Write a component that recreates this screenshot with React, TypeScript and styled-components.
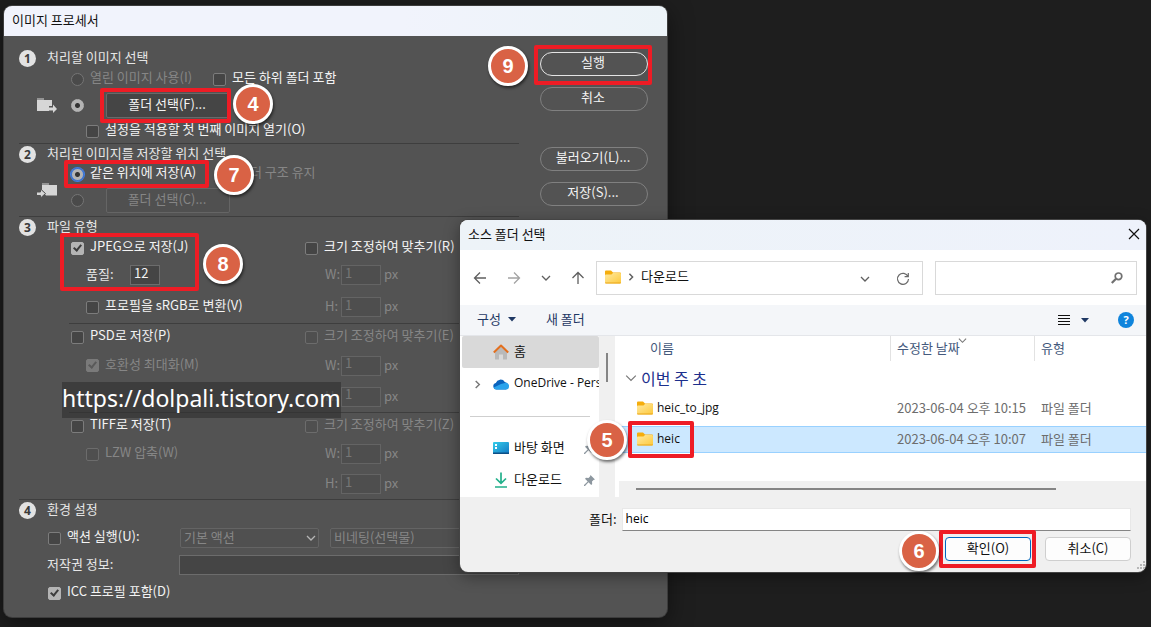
import React from 'react';
import styled, { createGlobalStyle, css } from 'styled-components';

const GlobalStyle = createGlobalStyle`
  *, *::before, *::after { box-sizing: border-box; }
  body {
    margin: 0;
    background: #1e1e1e;
    font-family: "Noto Sans CJK KR", "Noto Sans", sans-serif;
    font-size: 13px;
    line-height: 20px;
  }
  button, input, select { font: inherit; margin: 0; }
`;

const Desktop = styled.main`
  position: relative;
  min-height: 100vh;
  overflow: hidden;
  background: #1e1e1e;
`;

/* ---------- tutorial annotations ---------- */

const Anchor = styled.div`
  position: relative;
  display: flex;
  align-items: center;
`;

const Frame = styled.span<{ $inset: string }>`
  position: absolute;
  inset: ${(p) => p.$inset};
  border: 4px solid #ee1c25;
  border-radius: 2px;
  pointer-events: none;
  z-index: 2;
`;

const Marker = styled.span<{ $left: number; $top: number }>`
  position: absolute;
  left: ${(p) => p.$left}px;
  top: ${(p) => p.$top}px;
  width: 40px;
  height: 40px;
  display: flex;
  align-items: center;
  justify-content: center;
  border: 3px solid #fff;
  border-radius: 50%;
  background: #d96245;
  color: #fff;
  font: bold 20px/24px "Liberation Sans", sans-serif;
  box-shadow: 1px 2px 3px rgba(0, 0, 0, 0.55);
  z-index: 3;
`;

const Watermark = styled.div`
  position: absolute;
  left: 58px;
  top: 376px;
  height: 36px;
  white-space: nowrap;
  background: rgba(48, 48, 48, 0.62);
  color: #fff;
  font: 23px/32px "Noto Sans", "Open Sans", sans-serif;
  z-index: 2;
`;

/* ---------- image processor window ---------- */

const ProcessorWindow = styled.section`
  position: absolute;
  left: 4px;
  right: 484px;
  top: 6px;
  padding-bottom: 5px;
  border-radius: 8px;
  background: #535353;
  color: #e6e6e6;
  box-shadow: 0 0 0 1px #3c3c3c, 0 6px 24px rgba(0, 0, 0, 0.5);
`;

const TitleBar = styled.header`
  display: flex;
  align-items: center;
  justify-content: space-between;
  height: 30px;
  padding: 0 6px 2px 8px;
  border-radius: 8px 8px 0 0;
  background: linear-gradient(90deg, #f1f3fc 60%, #ecf3f8);
  color: #111;
`;

const DialogTitleBar = styled(TitleBar)`
  background: linear-gradient(90deg, #edf3f8, #eef2fb);
`;

const Title = styled.h1`
  margin: 0;
  font-size: 13px;
  font-weight: 400;
`;

const ProcessorBody = styled.div`
  display: flex;
  gap: 21px;
  padding: 0 19px 0 15px;
`;

const Sections = styled.div`
  flex: 1;
  min-width: 0;
  padding-top: 12px;
`;

const Section = styled.section<{ $last?: boolean; $pad?: number }>`
  padding-bottom: ${(p) => p.$pad || 0}px;
  border-bottom: ${(p) => (p.$last ? '0' : '1px solid #3e3e3e')};
`;

const SectionHead = styled.div`
  display: grid;
  grid-template-columns: 28px 1fr;
  align-items: center;
  height: 20px;
`;

const SectionNumber = styled.span`
  width: 17px;
  height: 17px;
  border-radius: 50%;
  background: #e2e2e2;
  color: #3a3a3a;
  text-align: center;
  font: bold 12px/17px "Open Sans", sans-serif;
`;

const SectionTitle = styled.h2`
  margin: -2px 0 0;
  font-size: 13px;
  font-weight: 400;
  white-space: nowrap;
`;

const Row = styled.div<{ $h: number; $indent?: number; $gap?: number }>`
  display: flex;
  align-items: center;
  height: ${(p) => p.$h}px;
  padding-left: ${(p) => p.$indent || 0}px;
  gap: ${(p) => p.$gap || 0}px;
`;

const FormatGroup = styled.div<{ $last?: boolean }>`
  display: grid;
  grid-template-columns: 236px 1fr;
  margin-left: 50px;
  border-bottom: ${(p) => (p.$last ? '0' : '1px solid #3e3e3e')};
`;

const Choice = styled.label<{ $off?: boolean; $width?: number }>`
  display: flex;
  align-items: center;
  gap: 6px;
  height: 20px;
  width: ${(p) => (p.$width ? p.$width + 'px' : 'auto')};
  white-space: nowrap;
  color: ${(p) => (p.$off ? '#868686' : '#f4f4f4')};

  span { margin-top: -4px; }
`;

const CheckBox = styled.input`
  appearance: none;
  flex: none;
  position: relative;
  width: 13px;
  height: 13px;
  border: 1px solid #7c7c7c;
  border-radius: 2px;
  background: #454545;

  &:disabled { border-color: #6c6c6c; background: #4f4f4f; }
  &:checked { border-color: #b4b4b4; background: #b4b4b4; }
  &:checked:disabled { border-color: #7a7a7a; background: #7a7a7a; }
  &:checked::after {
    content: "";
    position: absolute;
    left: 3px;
    top: 0;
    width: 5px;
    height: 8px;
    border: solid #3c3c3c;
    border-width: 0 2px 2px 0;
    transform: rotate(40deg);
  }
  &:checked:disabled::after { border-color: #5a5a5a; }
`;

const Radio = styled.input<{ $accent?: boolean }>`
  appearance: none;
  flex: none;
  width: 13px;
  height: 13px;
  border: 1px solid #757575;
  border-radius: 50%;
  background: #4a4a4a;

  &:checked {
    border-color: ${(p) => (p.$accent ? '#3f7ee8' : '#b4b4b4')};
    background: radial-gradient(circle, #333 0 2px, #b4b4b4 3px);
    ${(p) => p.$accent && css`box-shadow: 0 0 0 1px #3f7ee8;`}
  }
`;

const FolderButton = styled.button`
  width: 124px;
  height: 25px;
  margin-left: 8px;
  padding: 0 2px 3px 0;
  border: 1px solid #696969;
  border-radius: 2px;
  background: #454545;
  color: #f4f4f4;
  line-height: 20px;

  &:disabled { background: #505050; border-color: #656565; color: #868686; }
`;

const NumberInput = styled.input<{ $width: number }>`
  width: ${(p) => p.$width}px;
  height: 20px;
  padding: 0 0 5px 3px;
  border: 1px solid #6c6c6c;
  border-radius: 0;
  background: #454545;
  color: #f4f4f4;

  &:disabled { background: #4e4e4e; border-color: #646464; color: #767676; }
`;

const Caption = styled.label<{ $off?: boolean; $width?: number }>`
  width: ${(p) => (p.$width ? p.$width + 'px' : 'auto')};
  margin-top: -2px;
  white-space: nowrap;
  color: ${(p) => (p.$off ? '#868686' : '#e6e6e6')};
`;

const SelectWrap = styled.div<{ $grow?: boolean }>`
  position: relative;
  flex: ${(p) => (p.$grow ? '1' : '0 0 139px')};

  svg { position: absolute; right: 3px; top: 5px; }
`;

const DarkSelect = styled.select`
  appearance: none;
  display: block;
  width: 100%;
  height: 20px;
  padding: 0 4px 3px 3px;
  border: 1px solid #646464;
  border-radius: 2px;
  background: #505050;
  color: #868686;
  opacity: 1;
  line-height: 16px;
`;

const DarkInput = styled.input`
  flex: 1;
  min-width: 0;
  height: 20px;
  border: 1px solid #6c6c6c;
  background: #454545;
  color: #f4f4f4;
`;

const Actions = styled.div`
  display: flex;
  flex-direction: column;
  gap: 11px;
  width: 108px;
  padding-top: 16px;
`;

const PillButton = styled.button<{ $primary?: boolean; $push?: boolean }>`
  width: 100%;
  height: 24px;
  margin-top: ${(p) => (p.$push ? 25 : 0)}px;
  padding: 0 2px 4px 0;
  border: 1px solid ${(p) => (p.$primary ? '#e4e4e4' : '#808080')};
  border-radius: 12px;
  background: transparent;
  color: #f4f4f4;
  line-height: 18px;
`;

const RaisedIcon = styled.span`
  display: flex;
  padding-bottom: 20px;
`;

const JpegBlock = styled.div`
  position: relative;
`;

const SelectGap = styled.span`
  width: 11px;
`;

/* ---------- folder picker dialog ---------- */

const PickerWindow = styled.section`
  position: absolute;
  left: 460px;
  right: 5px;
  top: 220px;
  border-radius: 8px;
  background: #f0f0f0;
  color: #111;
  box-shadow: 0 0 0 1px #444, 0 4px 16px rgba(0, 0, 0, 0.4);
`;

const IconButton = styled.button`
  display: flex;
  padding: 0;
  border: 0;
  background: none;
  color: inherit;
`;

const NavBar = styled.nav`
  display: flex;
  align-items: center;
  height: 55px;
  padding: 0 9px 0 13px;
  background: #fff;
  color: #5f5f5f;
`;

const NavButtons = styled.div`
  display: flex;
  align-items: center;
  gap: 20px;
  width: 123px;
`;

const AddressBar = styled.div`
  display: flex;
  align-items: center;
  flex: 1;
  height: 34px;
  padding: 0 12px 2px 8px;
  border: 1px solid #d9d9d9;
`;

const CrumbArrow = styled.span`
  display: flex;
  margin-left: 6px;
`;

const PathName = styled.span`
  flex: 1;
  margin: -2px 0 0 6px;
  color: #111;
`;

const AddressTools = styled.span`
  display: flex;
  align-items: center;
  gap: 26px;
  padding-top: 4px;
`;

const SearchBox = styled.label`
  display: flex;
  align-items: center;
  width: 202px;
  height: 34px;
  margin-left: 12px;
  padding-right: 13px;
  border: 1px solid #d9d9d9;
`;

const SearchInput = styled.input`
  flex: 1;
  min-width: 0;
  border: 0;
  outline: 0;
  background: none;
`;

const ToolBar = styled.div`
  display: flex;
  align-items: center;
  height: 31px;
  padding: 0 12px 0 17px;
  border-bottom: 1px solid #e4e6ea;
  background: #f4f6f9;
  color: #1f3864;
`;

const ToolButton = styled.button`
  display: flex;
  align-items: center;
  gap: 7px;
  margin-right: 30px;
  padding: 0 0 2px;
  border: 0;
  background: none;
  color: inherit;
`;

const Spacer = styled.span`
  flex: 1;
`;

const ViewButton = styled(IconButton)`
  align-items: center;
  gap: 11px;
  margin-right: 29px;
`;

const HelpDot = styled.span`
  width: 16px;
  height: 16px;
  border-radius: 50%;
  background: #0f84dc;
  color: #fff;
  text-align: center;
  font: bold 11px/16px "Open Sans", sans-serif;
`;

const Browser = styled.div`
  display: flex;
  height: 161px;
  background: #fff;
`;

const SideBar = styled.aside`
  width: 139px;
  overflow: hidden;
`;

const SideItem = styled.div<{ $active?: boolean }>`
  display: flex;
  align-items: center;
  gap: 5px;
  height: 32px;
  margin: 0 0 0 2px;
  padding-left: 11px;
  padding-right: 4px;
  border-radius: 2px;
  white-space: nowrap;
  background: ${(p) => (p.$active ? '#d9d9d9' : 'transparent')};

  svg { flex: none; }
`;

const Toggle = styled.span`
  display: flex;
  flex: none;
  width: 15px;
`;

const SideLabel = styled.span`
  flex: 1;
  min-width: 0;
  margin-top: -2px;
`;

const LatinLabel = styled(SideLabel)`
  font-family: "Open Sans", sans-serif;
  font-size: 12px;
`;

const Divider = styled.hr`
  height: 1px;
  margin: 16px 9px 15px 10px;
  border: 0;
  background: #cfcfcf;
`;

const VerticalTrack = styled.div`
  width: 16px;
  padding: 17px 7px;
  background: #f0f0f0;

  &::before {
    content: "";
    display: block;
    width: 2px;
    height: 29px;
    background: #858585;
  }
`;

const FilePane = styled.div`
  flex: 1;
  min-width: 0;
  display: flex;
  flex-direction: column;
  margin-left: 4px;
  background: #fff;
`;

const FileTable = styled.table`
  width: 100%;
  table-layout: fixed;
  border-collapse: separate;
  border-spacing: 0;

  th, td { padding: 0 0 2px 6px; text-align: left; font-weight: 400; white-space: nowrap; }
  th { position: relative; height: 25px; color: #44597c; }
  th + th { border-left: 1px solid #e2e2e2; }
  th:first-child { padding-left: 31px; }
  td { height: 27px; color: #6d6d6d; }
  td:first-child { padding-left: 0; color: #111; }
  td + td { padding-left: 7px; }
`;

const SortArrow = styled.span`
  position: absolute;
  left: 67px;
  top: 0;
  display: flex;
  color: #777;
`;

const GroupRow = styled.tr`
  td { height: 34px; padding-bottom: 0; }
`;

const GroupLabel = styled.button`
  display: flex;
  align-items: center;
  gap: 4px;
  margin-left: 6px;
  padding: 0;
  border: 0;
  background: none;
  color: #1c2f8c;
  font-size: 16px;
  line-height: 22px;
`;

const FileRow = styled.tr<{ $selected?: boolean }>`
  ${(p) =>
    p.$selected
      ? css`
          td { background: #cce8ff; border: solid #99d1ff; border-width: 1px 0; }
        `
      : css`
          td { height: 31px; padding-bottom: 6px; }
        `}
`;

const FileName = styled(Anchor)`
  gap: 4px;
  margin-left: 12px;
  padding-left: 6px;
  font-family: "Open Sans", sans-serif;
  font-size: 12px;
`;

const FileFrame = styled(Frame)`
  width: 66px;
`;

const HorizontalTrack = styled.div`
  height: 16px;
  margin-top: auto;
  padding: 7px 90px 7px 17px;
  background: #f0f0f0;

  &::before {
    content: "";
    display: block;
    height: 2px;
    background: #858585;
  }
`;

const Footer = styled.footer`
  position: relative;
  padding: 11px 15px 11px 0;
`;

const FolderField = styled.div`
  display: flex;
  align-items: center;
  gap: 5px;
  padding-left: 129px;

  label { margin-top: -2px; }
`;

const FolderInput = styled.input`
  flex: 1;
  min-width: 0;
  height: 23px;
  padding: 0 3px 2px;
  border: 1px solid #e8e8e8;
  border-bottom-color: #858585;
  background: #fff;
  font-family: "Open Sans", "Noto Sans CJK KR", sans-serif;
  font-size: 12px;
`;

const DialogButtons = styled.div`
  display: flex;
  justify-content: flex-end;
  gap: 14px;
  margin-top: 6px;
`;

const DialogButton = styled.button<{ $primary?: boolean }>`
  width: 86px;
  height: 24px;
  padding: 0 0 2px;
  border: 1px solid ${(p) => (p.$primary ? '#0067c0' : '#cfcfcf')};
  border-radius: 4px;
  background: #fdfdfd;
  color: #111;
  line-height: 20px;
`;

const Grip = styled.svg`
  position: absolute;
  right: 0;
  bottom: 2px;
`;

/* ---------- icons ---------- */

type ChevronProps = { dir?: 'down' | 'right'; w?: number; color?: string; stroke?: number };

const Chevron = ({ dir = 'down', w = 10, color = 'currentColor', stroke = 1.3 }: ChevronProps) => (
  <svg width={w} height={w} viewBox="0 0 10 10" fill="none" stroke={color} strokeWidth={stroke} aria-hidden="true">
    <path d={dir === 'down' ? 'M1 3l4 4 4-4' : 'M3 1l4 4-4 4'} />
  </svg>
);

const Caret = () => (
  <svg width="8" height="5" viewBox="0 0 8 5" aria-hidden="true">
    <path d="M0 0h8L4 4.5z" fill="#1f3864" />
  </svg>
);

const Folder = () => (
  <svg width="16" height="14" viewBox="0 0 16 14" aria-hidden="true">
    <defs>
      <linearGradient id="folderFace" x1="0" y1="0" x2="1" y2="1">
        <stop offset="0" stopColor="#ffe9a0" />
        <stop offset="1" stopColor="#fdc93c" />
      </linearGradient>
    </defs>
    <path d="M0 1.5Q0 .5 1 .5h5L8 2.500h7q1 0 1 1V6H0z" fill="#f5ad0c" />
    <path d="M0 5.500Q0 4.500 1 4.500h5.500L8 3h7q1 0 1 1v8.500q0 1-1 1H1q-1 0-1-1z" fill="url(#folderFace)" />
    <path d="M0 12.500q0 1 1 1h14q1 0 1-1z" fill="#e9a51b" />
  </svg>
);

const FolderOut = () => (
  <svg width="20" height="15" viewBox="0 0 20 15" aria-hidden="true">
    <path d="M0 .5h7v1H0zM0 2h15v6h-3v5H0z" fill="#d6d6d6" />
    <path d="M12 9.500h4V6.500l4 4.500-4 4V12.500h-4z" fill="#d6d6d6" />
  </svg>
);

const FolderIn = () => (
  <svg width="20" height="15" viewBox="0 0 20 15" aria-hidden="true">
    <path d="M5 .5h7v1H5zM5 2h15v10.500H9L5 7z" fill="#d6d6d6" />
    <path d="M-.5 9h4V6l5 4.500-5 4.500V12.500h-4z" fill="#d6d6d6" stroke="#535353" strokeWidth="1" />
  </svg>
);

const Arrow = ({ turn = 0, color = '#5f5f5f' }: { turn?: number; color?: string }) => (
  <svg width="14" height="14" viewBox="0 0 14 14" fill="none" stroke={color} strokeWidth="1.3" aria-hidden="true">
    <path transform={`rotate(${turn} 7 7)`} d="M13 7H1.500M7 1.500L1.500 7 7 12.500" />
  </svg>
);

const Refresh = () => (
  <svg width="14" height="14" viewBox="0 0 14 14" fill="none" stroke="#6b6b6b" strokeWidth="1.2" aria-hidden="true">
    <path d="M12 4.500A5.500 5.500 0 1 0 12.500 7M12.300 1v3.700H8.600" />
  </svg>
);

const Magnifier = () => (
  <svg width="12" height="12" viewBox="0 0 12 12" fill="none" stroke="#707070" aria-hidden="true">
    <circle cx="7.500" cy="4.300" r="3.300" strokeWidth="1.700" />
    <path d="M5 6.800L.8 11" strokeWidth="2.200" />
  </svg>
);

const Home = () => (
  <svg width="16" height="16" viewBox="0 0 16 16" aria-hidden="true">
    <path d="M2 7.500L8 2l6 5.500V15q0 .5-.5.500H10v-5H6v5H2.500Q2 15.500 2 15z" fill="#b9b9b9" />
    <path d="M.8 8.500L8 1.500l7.200 7" fill="none" stroke="#e36f1e" strokeWidth="2" strokeLinejoin="round" />
  </svg>
);

const Cloud = () => (
  <svg width="16" height="11" viewBox="0 0 16 11" aria-hidden="true">
    <path d="M3.500 10.500A3.300 3.300 0 0 1 2.800 4 5 5 0 0 1 11.800 3 4 4 0 0 1 13 10.500z" fill="#0a63bd" />
    <path d="M3.500 10.500Q1 10.300.8 8.500L8 5l3-.8A3.300 3.300 0 0 1 16 7.500a3 3 0 0 1-3 3z" fill="#2aa3ec" />
  </svg>
);

const DesktopIcon = () => (
  <svg width="16" height="13" viewBox="0 0 16 13" aria-hidden="true">
    <defs>
      <linearGradient id="screenFace" x1="0" y1="0" x2="1" y2="1">
        <stop offset="0" stopColor="#35cdea" />
        <stop offset="1" stopColor="#1378c4" />
      </linearGradient>
    </defs>
    <rect width="16" height="12" rx="1" fill="url(#screenFace)" />
    <path d="M0 10.500h16v1q0 .5-.5.500H.5q-.5 0-.5-.5z" fill="#0d4f86" />
    <path d="M2 2h2v2H2zM2 5h2v2H2z" fill="#fff" />
  </svg>
);

const Download = () => (
  <svg width="16" height="16" viewBox="0 0 16 16" fill="none" stroke="#23b08b" strokeWidth="1.700" aria-hidden="true">
    <path d="M8 .5v10.500M3 6.500l5 4.800 5-4.800M2 15h12" />
  </svg>
);

const Pin = () => (
  <svg width="11" height="11" viewBox="0 0 11 11" aria-hidden="true">
    <path d="M6.500 0L11 4.500l-1.500.5-1.500 1.500.2 2.500-1 1-2.700-2.700L1 11H0v-1l3.700-3.500L1 3.800l1-1 2.500.2L6 1.500z" fill="#8d979f" />
  </svg>
);

/* ---------- composed parts ---------- */

type SizeProps = { id: string; hotkey: string; enabled?: boolean; first: number; rows: number };

const SizeFit = ({ id, hotkey, enabled, first, rows }: SizeProps) => (
  <div>
    <Row $h={first}>
      <Choice $off={!enabled}>
        <CheckBox type="checkbox" disabled={!enabled} />
        <span>크기 조정하여 맞추기({hotkey})</span>
      </Choice>
    </Row>
    {['W', 'H'].map((axis) => (
      <Row key={axis} $h={rows} $indent={20} $gap={3}>
        <Caption $off $width={13} htmlFor={`${id}${axis}`}>{axis}:</Caption>
        <NumberInput $width={40} id={`${id}${axis}`} defaultValue="1" disabled />
        <Caption $off as="span">px</Caption>
      </Row>
    ))}
  </div>
);

const ImageProcessor = () => (
  <ProcessorWindow>
    <TitleBar><Title>이미지 프로세서</Title></TitleBar>
    <ProcessorBody>
      <Sections>
        <Section $pad={1}>
          <SectionHead>
            <SectionNumber>1</SectionNumber>
            <SectionTitle>처리할 이미지 선택</SectionTitle>
          </SectionHead>
          <Row $h={22} $indent={52}>
            <Choice $off $width={142}>
              <Radio type="radio" name="source" disabled />
              <span>열린 이미지 사용(I)</span>
            </Choice>
            <Choice>
              <CheckBox type="checkbox" />
              <span>모든 하위 폴더 포함</span>
            </Choice>
          </Row>
          <Row $h={30} $indent={18} $gap={14}>
            <FolderOut />
            <Radio type="radio" name="source" defaultChecked aria-label="폴더 선택" />
            <Anchor>
              <FolderButton>폴더 선택(F)...</FolderButton>
              <Frame $inset="-5px -1px -5px 2px" />
              <Marker $left={135} $top={-9}>4</Marker>
            </Anchor>
          </Row>
          <Row $h={22} $indent={67}>
            <Choice>
              <CheckBox type="checkbox" />
              <span>설정을 적용할 첫 번째 이미지 열기(O)</span>
            </Choice>
          </Row>
        </Section>

        <Section>
          <SectionHead>
            <SectionNumber>2</SectionNumber>
            <SectionTitle>처리된 이미지를 저장할 위치 선택</SectionTitle>
          </SectionHead>
          <Row $h={20} $indent={52}>
            <Anchor>
              <Choice $width={148}>
                <Radio type="radio" name="target" $accent defaultChecked />
                <span>같은 위치에 저장(A)</span>
              </Choice>
              <Frame $inset="-4px 10px -4px -7px" />
              <Marker $left={143} $top={-9}>7</Marker>
            </Anchor>
            <Choice $off>
              <CheckBox type="checkbox" disabled />
              <span>폴더 구조 유지</span>
            </Choice>
          </Row>
          <Row $h={32} $indent={18} $gap={14}>
            <RaisedIcon><FolderIn /></RaisedIcon>
            <Radio type="radio" name="target" aria-label="다른 폴더 선택" />
            <FolderButton disabled>폴더 선택(C)...</FolderButton>
          </Row>
        </Section>

        <Section>
          <SectionHead>
            <SectionNumber>3</SectionNumber>
            <SectionTitle>파일 유형</SectionTitle>
          </SectionHead>
          <FormatGroup>
            <div>
              <JpegBlock>
                <Row $h={22} $indent={2}>
                  <Choice>
                    <CheckBox type="checkbox" defaultChecked />
                    <span>JPEG으로 저장(J)</span>
                  </Choice>
                </Row>
                <Row $h={32} $indent={17}>
                  <Caption $width={44} htmlFor="quality">품질:</Caption>
                  <NumberInput $width={30} id="quality" defaultValue="12" />
                </Row>
                <Frame $inset="-4px 106px 0 -9px" />
                <Marker $left={134} $top={7}>8</Marker>
              </JpegBlock>
              <Row $h={32} $indent={17}>
                <Choice>
                  <CheckBox type="checkbox" />
                  <span>프로필을 sRGB로 변환(V)</span>
                </Choice>
              </Row>
            </div>
            <SizeFit id="jpeg" hotkey="R" enabled first={22} rows={32} />
          </FormatGroup>
          <FormatGroup>
            <div>
              <Row $h={26} $indent={2}>
                <Choice>
                  <CheckBox type="checkbox" />
                  <span>PSD로 저장(P)</span>
                </Choice>
              </Row>
              <Row $h={31} $indent={17}>
                <Choice $off>
                  <CheckBox type="checkbox" defaultChecked disabled />
                  <span>호환성 최대화(M)</span>
                </Choice>
              </Row>
            </div>
            <SizeFit id="psd" hotkey="E" first={26} rows={31} />
          </FormatGroup>
          <FormatGroup $last>
            <div>
              <Row $h={26} $indent={2}>
                <Choice>
                  <CheckBox type="checkbox" />
                  <span>TIFF로 저장(T)</span>
                </Choice>
              </Row>
              <Row $h={30} $indent={17}>
                <Choice $off>
                  <CheckBox type="checkbox" disabled />
                  <span>LZW 압축(W)</span>
                </Choice>
              </Row>
            </div>
            <SizeFit id="tiff" hotkey="Z" first={26} rows={30} />
          </FormatGroup>
        </Section>

        <Section $last>
          <SectionHead>
            <SectionNumber>4</SectionNumber>
            <SectionTitle>환경 설정</SectionTitle>
          </SectionHead>
          <Row $h={36} $indent={29}>
            <Choice $width={132}>
              <CheckBox type="checkbox" />
              <span>액션 실행(U):</span>
            </Choice>
            <SelectWrap>
              <DarkSelect disabled aria-label="액션 세트"><option>기본 액션</option></DarkSelect>
              <Chevron color="#b5b5b5" />
            </SelectWrap>
            <SelectGap />
            <SelectWrap $grow>
              <DarkSelect disabled aria-label="액션"><option>비네팅(선택물)</option></DarkSelect>
              <Chevron color="#b5b5b5" />
            </SelectWrap>
          </Row>
          <Row $h={18} $indent={28}>
            <Caption $width={132} htmlFor="copyright">저작권 정보:</Caption>
            <DarkInput id="copyright" />
          </Row>
          <Row $h={38} $indent={29}>
            <Choice>
              <CheckBox type="checkbox" defaultChecked />
              <span>ICC 프로필 포함(D)</span>
            </Choice>
          </Row>
        </Section>
      </Sections>

      <Actions>
        <Anchor>
          <PillButton $primary>실행</PillButton>
          <Frame $inset="-7px -4px -9px -6px" />
          <Marker $left={-52} $top={-6}>9</Marker>
        </Anchor>
        <PillButton>취소</PillButton>
        <PillButton $push>불러오기(L)...</PillButton>
        <PillButton>저장(S)...</PillButton>
      </Actions>
    </ProcessorBody>
    <Watermark>https://dolpali.tistory.com</Watermark>
  </ProcessorWindow>
);

const files = [
  { name: 'heic_to_jpg', date: '2023-06-04 오후 10:15', type: '파일 폴더' },
  { name: 'heic', date: '2023-06-04 오후 10:07', type: '파일 폴더', mark: '5' },
];

const FolderPicker = () => (
  <PickerWindow>
    <DialogTitleBar>
      <Title>소스 폴더 선택</Title>
      <IconButton aria-label="닫기">
        <svg width="12" height="12" viewBox="0 0 12 12" stroke="#111" strokeWidth="1.200" aria-hidden="true">
          <path d="M1 1l10 10M11 1L1 11" />
        </svg>
      </IconButton>
    </DialogTitleBar>
    <NavBar>
      <NavButtons>
        <IconButton aria-label="뒤로"><Arrow /></IconButton>
        <IconButton aria-label="앞으로"><Arrow turn={180} color="#a3a3a3" /></IconButton>
        <IconButton aria-label="최근 위치"><Chevron /></IconButton>
        <IconButton aria-label="위로"><Arrow turn={90} /></IconButton>
      </NavButtons>
      <AddressBar>
        <Folder />
        <CrumbArrow><Chevron dir="right" w={8} stroke={1.8} /></CrumbArrow>
        <PathName>다운로드</PathName>
        <AddressTools>
          <IconButton aria-label="이전 위치"><Chevron /></IconButton>
          <IconButton aria-label="새로 고침"><Refresh /></IconButton>
        </AddressTools>
      </AddressBar>
      <SearchBox>
        <SearchInput aria-label="검색" />
        <Magnifier />
      </SearchBox>
    </NavBar>
    <ToolBar>
      <ToolButton>구성 <Caret /></ToolButton>
      <ToolButton>새 폴더</ToolButton>
      <Spacer />
      <ViewButton aria-label="보기">
        <svg width="12" height="11" viewBox="0 0 12 11" stroke="#111" aria-hidden="true">
          <path d="M0 .5h12M0 3.500h12M0 6.500h12M0 9.500h12" />
        </svg>
        <Caret />
      </ViewButton>
      <IconButton aria-label="도움말">
        <HelpDot>?</HelpDot>
      </IconButton>
    </ToolBar>
    <Browser>
      <SideBar>
        <SideItem $active><Toggle /><Home /><SideLabel>홈</SideLabel></SideItem>
        <SideItem>
          <Toggle><Chevron dir="right" color="#777" stroke={1.6} w={9} /></Toggle>
          <Cloud /><LatinLabel>OneDrive - Pers</LatinLabel>
        </SideItem>
        <Divider />
        <SideItem><Toggle /><DesktopIcon /><SideLabel>바탕 화면</SideLabel><Pin /></SideItem>
        <SideItem><Toggle /><Download /><SideLabel>다운로드</SideLabel><Pin /></SideItem>
      </SideBar>
      <VerticalTrack />
      <FilePane>
        <FileTable>
          <colgroup>
            <col />
            <col width="144" />
            <col width="112" />
          </colgroup>
          <thead>
            <tr>
              <th scope="col">이름</th>
              <th scope="col">수정한 날짜<SortArrow><Chevron w={9} stroke={1.2} /></SortArrow></th>
              <th scope="col">유형</th>
            </tr>
          </thead>
          <tbody>
            <GroupRow>
              <td colSpan={3}><GroupLabel><Chevron w={12} color="#777" stroke={1} />이번 주 초</GroupLabel></td>
            </GroupRow>
            {files.map((f) => (
              <FileRow key={f.name} $selected={!!f.mark}>
                <td>
                  <FileName>
                    <Folder />
                    <span>{f.name}</span>
                    {f.mark && <FileFrame $inset="-8px auto -9px -3px" />}
                    {f.mark && <Marker $left={-44} $top={-9}>{f.mark}</Marker>}
                  </FileName>
                </td>
                <td>{f.date}</td>
                <td>{f.type}</td>
              </FileRow>
            ))}
          </tbody>
        </FileTable>
        <HorizontalTrack />
      </FilePane>
    </Browser>
    <Footer>
      <FolderField>
        <label htmlFor="folder">폴더:</label>
        <FolderInput id="folder" defaultValue="heic" />
      </FolderField>
      <DialogButtons>
        <Anchor>
          <DialogButton $primary>확인(O)</DialogButton>
          <Frame $inset="-7px -5px -7px -6px" />
          <Marker $left={-46} $top={-6}>6</Marker>
        </Anchor>
        <DialogButton>취소(C)</DialogButton>
      </DialogButtons>
      <Grip width="9" height="9" viewBox="0 0 9 9" aria-hidden="true">
        <path d="M6 0h2v2H6zM3 3h2v2H3zM6 3h2v2H6zM0 6h2v2H0zM3 6h2v2H3zM6 6h2v2H6z" fill="#b8b8b8" />
      </Grip>
    </Footer>
  </PickerWindow>
);

export default function App() {
  return (
    <>
      <GlobalStyle />
      <Desktop>
        <ImageProcessor />
        <FolderPicker />
      </Desktop>
    </>
  );
}
